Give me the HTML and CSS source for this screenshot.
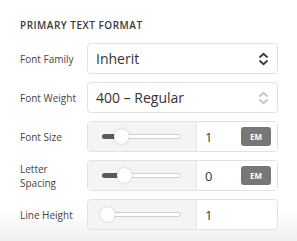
FILE: index.html
```html
<!DOCTYPE html>
<html lang="en">
<head>
    <meta charset="UTF-8">
    <meta name="viewport" content="width=device-width, initial-scale=1.0">
    <title>Primary Text Format</title>
    <link rel="stylesheet" href="styles.css">
</head>
<body>
    <div class="panel">
        <h2 class="panel-title">Primary Text Format</h2>

        <div class="field">
            <label class="field-label">Font Family</label>
            <div class="select">
                <span class="select-value">Inherit</span>
                <svg class="select-arrows" width="11" height="14" viewBox="0 0 11 14">
                    <path d="M1.5 5.5 L5.5 1.8 L9.5 5.5 M1.5 8.5 L5.5 12.2 L9.5 8.5" fill="none" stroke="#3a3a3a" stroke-width="1.8"/>
                </svg>
            </div>
        </div>

        <div class="field">
            <label class="field-label">Font Weight</label>
            <div class="select">
                <span class="select-value">400 – Regular</span>
                <svg class="select-arrows" width="11" height="14" viewBox="0 0 11 14">
                    <path d="M1.5 5.5 L5.5 1.8 L9.5 5.5 M1.5 8.5 L5.5 12.2 L9.5 8.5" fill="none" stroke="#c4c4c4" stroke-width="1.8"/>
                </svg>
            </div>
        </div>

        <div class="field">
            <label class="field-label">Font Size</label>
            <div class="slider-group">
                <div class="slider">
                    <div class="track">
                        <div class="track-fill" style="width: 18px"></div>
                        <div class="thumb" style="left: 18px"></div>
                    </div>
                </div>
                <div class="value">
                    <span class="value-text">1</span>
                    <span class="unit">EM</span>
                </div>
            </div>
        </div>

        <div class="field">
            <label class="field-label">Letter Spacing</label>
            <div class="slider-group">
                <div class="slider">
                    <div class="track">
                        <div class="track-fill" style="width: 21px"></div>
                        <div class="thumb" style="left: 21px"></div>
                    </div>
                </div>
                <div class="value">
                    <span class="value-text">0</span>
                    <span class="unit">EM</span>
                </div>
            </div>
        </div>

        <div class="field">
            <label class="field-label">Line Height</label>
            <div class="slider-group">
                <div class="slider">
                    <div class="track">
                        <div class="thumb" style="left: 4px"></div>
                    </div>
                </div>
                <div class="value">
                    <span class="value-text">1</span>
                </div>
            </div>
        </div>
    </div>
</body>
</html>
```

FILE: styles.css
```css
body {
    margin: 0;
    font-family: "Open Sans", "Noto Sans", sans-serif;
    color: #333;
    background: linear-gradient(to bottom, #ffffff 0, #ffffff 212px, #efefef 241px);
    height: 241px;
    overflow: hidden;
}

.panel {
    padding: 18px 19px 0 20px;
}

.panel-title {
    margin: 0 0 11px;
    font-size: 10px;
    line-height: 14px;
    font-weight: 600;
    letter-spacing: 0.5px;
    text-transform: uppercase;
    color: #3a3a3a;
}

.field {
    display: flex;
    align-items: center;
    height: 31px;
    margin-bottom: 8px;
}

.field-label {
    width: 67px;
    flex-shrink: 0;
    padding-right: 6px;
    box-sizing: border-box;
    font-size: 10px;
    line-height: 14px;
    color: #444;
}

.select {
    flex: 1;
    height: 31px;
    box-sizing: border-box;
    border: 1px solid #e2e2e2;
    border-radius: 4px;
    background: #fff;
    display: flex;
    align-items: center;
    justify-content: space-between;
    padding: 0 8px 0 8px;
}

.select-value {
    font-size: 14px;
    color: #333;
}

.select-arrows {
    display: block;
}

.slider-group {
    flex: 1;
    height: 31px;
    box-sizing: border-box;
    border: 1px solid #e2e2e2;
    border-radius: 4px;
    display: flex;
    overflow: hidden;
}

.slider {
    width: 109px;
    flex-shrink: 0;
    background: #f4f4f4;
    border-right: 1px solid #e4e4e4;
    display: flex;
    align-items: center;
    padding-left: 14px;
    box-sizing: border-box;
}

.track {
    position: relative;
    width: 79px;
    height: 5px;
    box-sizing: border-box;
    border: 1px solid #cfcfcf;
    border-radius: 3px;
    background: #fff;
}

.track-fill {
    position: absolute;
    left: -1px;
    top: -1px;
    height: 5px;
    border-radius: 3px 0 0 3px;
    background: #5a5a5a;
}

.thumb {
    position: absolute;
    top: -6px;
    width: 15px;
    height: 15px;
    margin-left: -7px;
    border-radius: 50%;
    background: #fff;
    box-shadow: 0 0 2px rgba(0, 0, 0, 0.25);
}

.value {
    flex: 1;
    background: #fff;
    display: flex;
    align-items: center;
    justify-content: space-between;
    padding: 0 6px 0 8px;
}

.value-text {
    font-size: 13px;
    color: #333;
}

.unit {
    width: 30px;
    height: 19px;
    border-radius: 3px;
    background: #777;
    color: #fff;
    font-size: 8px;
    font-weight: 700;
    display: flex;
    align-items: center;
    justify-content: center;
}
```
